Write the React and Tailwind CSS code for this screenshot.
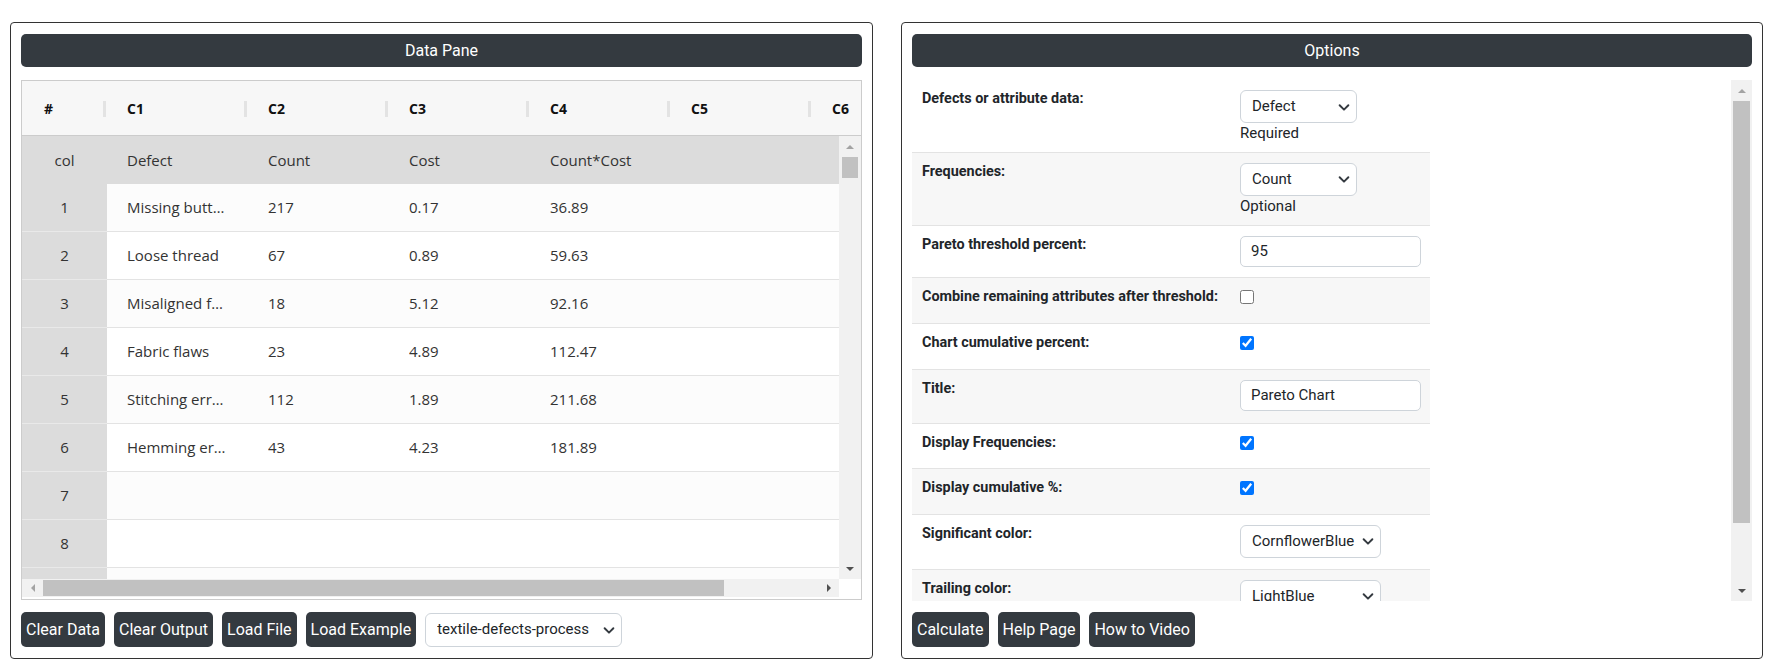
import React from 'react';

const columns = ['C1', 'C2', 'C3', 'C4', 'C5', 'C6'];
const colNames = ['Defect', 'Count', 'Cost', 'Count*Cost', '', ''];

const rows = [
  ['Missing buttons', '217', '0.17', '36.89'],
  ['Loose thread', '67', '0.89', '59.63'],
  ['Misaligned fabric', '18', '5.12', '92.16'],
  ['Fabric flaws', '23', '4.89', '112.47'],
  ['Stitching errors', '112', '1.89', '211.68'],
  ['Hemming errors', '43', '4.23', '181.89'],
  [],
  [],
  [],
];

const colorChoices = ['CornflowerBlue', 'LightBlue', 'SteelBlue', 'Gray', 'Orange'];

const options = [
  { label: 'Defects or attribute data:', kind: 'select', value: 'Defect', choices: ['Defect', 'Count', 'Cost', 'Count*Cost'], note: 'Required', row: 'h-[72px]', width: 'w-[117px]' },
  { label: 'Frequencies:', kind: 'select', value: 'Count', choices: ['Count', 'Cost', 'Count*Cost'], note: 'Optional', row: 'h-[73px]', width: 'w-[117px]' },
  { label: 'Pareto threshold percent:', kind: 'input', value: '95', row: 'h-[52px]' },
  { label: 'Combine remaining attributes after threshold:', kind: 'check', checked: false, row: 'h-[46px]' },
  { label: 'Chart cumulative percent:', kind: 'check', checked: true, row: 'h-[46px]' },
  { label: 'Title:', kind: 'input', value: 'Pareto Chart', row: 'h-[54px]' },
  { label: 'Display Frequencies:', kind: 'check', checked: true, row: 'h-[45px]' },
  { label: 'Display cumulative %:', kind: 'check', checked: true, row: 'h-[46px]' },
  { label: 'Significant color:', kind: 'select', value: 'CornflowerBlue', choices: colorChoices, row: 'h-[55px]', width: 'w-[141px]' },
  { label: 'Trailing color:', kind: 'select', value: 'LightBlue', choices: colorChoices, row: 'h-[55px]', width: 'w-[141px]' },
];

function Arrow({ dir, color = '#a3a3a3' }) {
  const pts = {
    up: '0,6 4,2 8,6',
    down: '0,2 4,6 8,2',
    left: '6,0 2,4 6,8',
    right: '2,0 6,4 2,8',
  }[dir];
  return (
    <svg width="8" height="8" viewBox="0 0 8 8">
      <polygon points={pts} fill={color} />
    </svg>
  );
}

function Chevron() {
  return (
    <svg
      className="absolute right-[6px] top-1/2 -translate-y-1/2 w-[14px] h-[14px] pointer-events-none"
      viewBox="0 0 16 16"
      fill="none"
      stroke="#343a40"
      strokeWidth="2.2"
      strokeLinecap="round"
      strokeLinejoin="round"
    >
      <path d="m3 6 5 5 5-5" />
    </svg>
  );
}

function Select({ value, choices, className }) {
  return (
    <div className={`relative ${className}`}>
      <select
        defaultValue={value}
        className="w-full h-full appearance-none bg-white border border-[#ced4da] rounded-[6px] pl-[11px] pr-[22px] text-[15px] text-[#212529] outline-none"
      >
        {choices.map((c) => (
          <option key={c}>{c}</option>
        ))}
      </select>
      <Chevron />
    </div>
  );
}

function DarkButton({ children }) {
  return (
    <button className="h-[35px] px-[5px] rounded-[5px] bg-[#343a40] text-white text-[16px] leading-none">
      {children}
    </button>
  );
}

function PaneHeader({ title }) {
  return (
    <div className="h-[33px] rounded-[5px] bg-[#343a40] text-white text-[16px] flex items-center justify-center">
      {title}
    </div>
  );
}

function DataGrid() {
  return (
    <div className="mt-[13px] h-[520px] border border-[#cccccc] flex flex-col overflow-hidden font-['Open_Sans',sans-serif] text-[15px] text-[#333333]">
      {/* column letters */}
      <div className="h-[55px] shrink-0 flex bg-[#f7f7f7] border-b border-[#cccccc] font-bold text-[14px] text-[#111111] overflow-hidden">
        <div className="relative w-[85px] shrink-0 flex items-center pl-[22px]">
          #
          <span className="absolute right-[1px] top-[20px] w-[3px] h-[16px] bg-[#e3e3e3]" />
        </div>
        {columns.map((c) => (
          <div key={c} className="relative w-[141px] shrink-0 flex items-center pl-[20px]">
            {c}
            <span className="absolute right-[1px] top-[20px] w-[3px] h-[16px] bg-[#e3e3e3]" />
          </div>
        ))}
      </div>

      <div className="flex-1 flex min-h-0">
        <div className="flex-1 overflow-hidden">
          <div className="h-[48px] flex bg-[#dcdcdc]">
            <div className="w-[85px] shrink-0 flex items-center justify-center">col</div>
            {colNames.map((n, i) => (
              <div key={i} className="w-[141px] shrink-0 flex items-center pl-[20px]">
                {n}
              </div>
            ))}
          </div>
          {rows.map((r, i) => (
            <div key={i} className="h-[48px] flex">
              <div className="w-[85px] shrink-0 flex items-center justify-center bg-[#dcdcdc] border-b border-[#e9e9e9]">
                {i + 1}
              </div>
              <div className={`flex-1 flex border-b border-[#e3e3e3] ${i % 2 === 0 ? 'bg-[#fcfcfc]' : 'bg-white'}`}>
                {columns.map((c, j) => (
                  <div key={c} className="w-[141px] shrink-0 flex items-center pl-[20px] pr-[21px]">
                    <span className="truncate">{r[j] || ''}</span>
                  </div>
                ))}
              </div>
            </div>
          ))}
        </div>
        <div className="w-[22px] shrink-0 bg-[#f1f1f1] flex flex-col">
          <div className="h-[21px] flex items-center justify-center">
            <Arrow dir="up" />
          </div>
          <div className="h-[21px] mx-[3px] bg-[#c1c1c1]" />
          <div className="flex-1" />
          <div className="h-[21px] flex items-center justify-center">
            <Arrow dir="down" color="#505050" />
          </div>
        </div>
      </div>

      <div className="h-[20px] shrink-0 flex pb-[2px]">
        <div className="flex-1 flex bg-[#f1f1f1]">
          <div className="w-[21px] flex items-center justify-center">
            <Arrow dir="left" />
          </div>
          <div className="w-[681px] bg-[#c1c1c1] my-[1px]" />
          <div className="flex-1" />
          <div className="w-[21px] flex items-center justify-center">
            <Arrow dir="right" color="#505050" />
          </div>
        </div>
        <div className="w-[22px] bg-white" />
      </div>
    </div>
  );
}

function OptionControl({ opt }) {
  if (opt.kind === 'select') {
    return (
      <div>
        <Select value={opt.value} choices={opt.choices} className={`${opt.width} h-[33px]`} />
        {opt.note && <div className="text-[15px] leading-[20px] text-[#212529]">{opt.note}</div>}
      </div>
    );
  }
  if (opt.kind === 'input') {
    return (
      <input
        defaultValue={opt.value}
        className="w-[181px] h-[31px] border border-[#ced4da] rounded-[5px] bg-white pl-[10px] text-[15px] text-[#212529] outline-none"
      />
    );
  }
  return (
    <div className="pt-[2px]">
      <input
        type="checkbox"
        defaultChecked={opt.checked}
        className="block m-0 w-[14px] h-[14px] accent-[#0075ff]"
      />
    </div>
  );
}

function OptionsPanel() {
  return (
    <div className="mt-[13px] h-[521px] flex overflow-hidden">
      <div className="flex-1 overflow-hidden">
        <table className="w-[518px] table-fixed border-collapse text-[#212529]">
          <colgroup>
            <col className="w-[318px]" />
            <col className="w-[200px]" />
          </colgroup>
          <tbody>
            {options.map((opt, i) => (
              <tr
                key={opt.label}
                className={`${opt.row} ${i > 0 ? 'border-t border-[#e3e3e3]' : ''} ${i % 2 === 1 ? 'bg-[#f7f7f7]' : 'bg-white'}`}
              >
                <td className="align-top pl-[10px] pr-0 pt-[9px] font-bold text-[14.4px] leading-[20px] whitespace-nowrap">
                  {opt.label}
                </td>
                <td className="align-top px-[10px] pt-[10px]">
                  <OptionControl opt={opt} />
                </td>
              </tr>
            ))}
          </tbody>
        </table>
      </div>
      <div className="w-[21px] shrink-0 bg-[#f1f1f1] flex flex-col">
        <div className="h-[21px] flex items-center justify-center">
          <Arrow dir="up" />
        </div>
        <div className="h-[422px] mx-[2px] bg-[#c1c1c1]" />
        <div className="flex-1" />
        <div className="h-[21px] flex items-center justify-center">
          <Arrow dir="down" color="#505050" />
        </div>
      </div>
    </div>
  );
}

export default function App() {
  return (
    <div className="w-[1785px] h-[665px] bg-white flex gap-[28px] pl-[10px] pt-[22px] font-['Roboto',sans-serif]">
      <section className="w-[863px] h-[637px] border border-[#333333] rounded-[4px] px-[10px] pt-[11px] flex flex-col">
        <PaneHeader title="Data Pane" />
        <DataGrid />
        <div className="mt-[12px] flex items-center gap-[9px]">
          <DarkButton>Clear Data</DarkButton>
          <DarkButton>Clear Output</DarkButton>
          <DarkButton>Load File</DarkButton>
          <DarkButton>Load Example</DarkButton>
          <Select
            value="textile-defects-process"
            choices={['textile-defects-process', 'call-center-complaints', 'machine-downtime']}
            className="w-[197px] h-[34px]"
          />
        </div>
      </section>

      <section className="w-[862px] h-[637px] border border-[#333333] rounded-[4px] px-[10px] pt-[11px] flex flex-col">
        <PaneHeader title="Options" />
        <OptionsPanel />
        <div className="mt-[11px] flex items-center gap-[9px]">
          <DarkButton>Calculate</DarkButton>
          <DarkButton>Help Page</DarkButton>
          <DarkButton>How to Video</DarkButton>
        </div>
      </section>
    </div>
  );
}
